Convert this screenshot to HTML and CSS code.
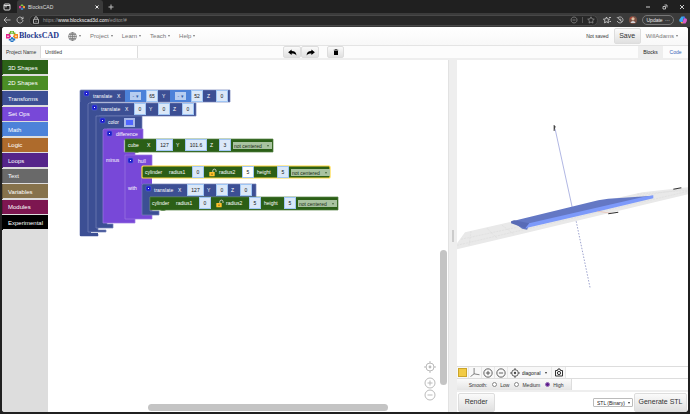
FILE: index.html
```html
<!DOCTYPE html>
<html lang="en">
<head>
<meta charset="utf-8">
<title>BlocksCAD</title>
<link rel="stylesheet" href="styles.css">
</head>
<body>
<svg class="defs" aria-hidden="true">
  <symbol id="logo" viewBox="0 0 12 12">
    <path fill="#70b52f" d="M4 1h4v1.6h1.4v2H7.5V3.8h-3v.8H2.8v-2H4z"/>
    <path fill="#e0268b" d="M0 4h4v1.5h1v1.6H4v1.4H0z"/>
    <path fill="#f28a1e" d="M8 4h4v4.5H8V7.1H7V5.5h1z"/>
    <path fill="#2374c4" d="M4.6 7.2h2.8v1.4h1.8v2H7.5V12h-3v-1.4H2.8V9h1.8z"/>
    <circle cx="2" cy="6.2" r=".8" fill="#fff"/><circle cx="10" cy="6.2" r=".8" fill="#fff"/><circle cx="6" cy="10" r=".8" fill="#fff"/><circle cx="6" cy="2.3" r=".7" fill="#fff"/>
  </symbol>
  <symbol id="lock" viewBox="0 0 8 8">
    <path d="M3.8 3.5V2.2a1.6 1.6 0 0 1 3.2 0v1.2" fill="none" stroke="#d8d8ce" stroke-width=".9"/>
    <rect x=".3" y="3.5" width="5.4" height="4.2" rx=".5" fill="#ffc12c"/><path d="M3 5v1.4" stroke="#5f4507" stroke-width=".9"/>
  </symbol>
  <symbol id="target" viewBox="0 0 12 12"><g fill="none" stroke="currentColor"><circle cx="6" cy="6" r="4"/><path d="M6 0v2.5M6 9.5V12M0 6h2.5M9.5 6H12"/></g><circle cx="6" cy="6" r="1.4" fill="currentColor"/></symbol>
  <symbol id="plus" viewBox="0 0 12 12"><g fill="none" stroke="currentColor"><circle cx="6" cy="6" r="5"/><path d="M3.5 6h5M6 3.5v5"/></g></symbol>
  <symbol id="minus" viewBox="0 0 12 12"><g fill="none" stroke="currentColor"><circle cx="6" cy="6" r="5"/><path d="M3.5 6h5"/></g></symbol>
  <symbol id="arrow" viewBox="0 0 10 8"><path d="M0 3.6 4 .5v1.8c3.5 0 5.3 1.5 5.5 5C8.200 5.500 6.700 5 4 5v1.800z"/></symbol>
</svg>

<div class="tabs">
  <svg class="ico" viewBox="0 0 10 10"><rect x="2" y="2" width="6" height="6" rx="1" fill="none" stroke="#ddd"/><path d="M2 3.500h6M4 3.500v2" stroke="#ddd"/></svg>
  <div class="tab"><svg class="fav"><use href="#logo"/></svg><span>BlocksCAD</span><button class="bare close" aria-label="Close tab"><svg class="tiny" viewBox="0 0 6 6"><path d="M1.500 1.500l3 3M4.500 1.500l-3 3" stroke="#eee"/></svg></button></div>
  <button class="bare" aria-label="New tab"><svg class="tiny" viewBox="0 0 6 6"><path d="M3 .5v5M.5 3h5" stroke="#bbb"/></svg></button>
  <div class="window">
    <button class="bare" aria-label="Minimize"><svg class="tiny" viewBox="0 0 6 6"><path d="M1 3h4" stroke="#ccc"/></svg></button>
    <button class="bare" aria-label="Restore"><svg class="tiny" viewBox="0 0 6 6"><path d="M1 2.500h2.500V5H1zM2.500 1H5v2.500" fill="none" stroke="#ddd" stroke-width=".8"/></svg></button>
    <button class="bare" aria-label="Close"><svg class="tiny" viewBox="0 0 6 6"><path d="M1 1l4 4M5 1L1 5" stroke="#ddd" stroke-width=".9"/></svg></button>
  </div>
</div>

<div class="address">
  <button class="bare" aria-label="Back"><svg class="nav" viewBox="0 0 8 8"><path d="M7.500 4H1M4 1 1 4l3 3" fill="none" stroke="#ccc" stroke-width=".8"/></svg></button>
  <button class="bare" aria-label="Reload"><svg class="nav" viewBox="0 0 8 8"><path d="M7 4a3 3 0 1 1-.9-2.100L7 3M7 .7V3H4.800" fill="none" stroke="#ccc" stroke-width=".8"/></svg></button>
  <div class="url">
    <svg class="nav" viewBox="0 0 8 8"><path d="M1.500 3.300h5v4h-5zM2.700 3.300V2a1.300 1.300 0 0 1 2.600 0v1.300M4 4.800v1" fill="none" stroke="#ccc" stroke-width=".8"/></svg>
    <span class="link">https://<b>www.blockscad3d.com</b>/editor/#</span>
    <svg class="nav" viewBox="0 0 8 8"><path d="M4 1a3 3 0 1 0 .1 0M2.500 4h3" fill="none" stroke="#888" stroke-width=".8"/></svg>
    <i class="rule"></i>
    <svg class="nav" viewBox="0 0 8 8"><path d="M4 .8l1 2.100 2.300.3-1.700 1.600.4 2.300-2-1.100-2 1.100.4-2.300L.7 3.200 3 2.900z" fill="none" stroke="#999" stroke-width=".7"/></svg>
  </div>
  <svg class="nav" viewBox="0 0 8 8"><path d="M3.500 1l.9 2 2.200.2L5 4.700l.5 2.100-2-1-2 1L2 4.700.4 3.200 2.600 3zM6 1.500h2M6.500 5.500H8" fill="none" stroke="#ddd" stroke-width=".8"/></svg>
  <svg class="nav" viewBox="0 0 8 8"><path d="M1.200 5A3 3 0 1 0 2 1.700M.8 1l5 5M4 2.500V4h1.500" fill="none" stroke="#ccc" stroke-width=".8"/></svg>
  <svg class="nav" viewBox="0 0 8 8"><circle cx="4" cy="4" r="4" fill="#7a5145"/><circle cx="4" cy="2.800" r="1.600" fill="#e2c1a5"/><path d="M1.500 7a2.600 2.600 0 0 1 5 0z" fill="#d6d6da"/><path d="M1 3l2-2" stroke="#c33b30"/></svg>
  <button class="update">Update <span>···</span></button>
  <svg class="nav" viewBox="0 0 8 8"><path d="M2.500.5h2.700L3.500 6H1.800C.3 6 0 4.800.4 3.500z" fill="#3aa9f2"/><path d="M4.500.5h1.200l1 2.500H5z" fill="#4d6af0"/><path d="M4.800 2.500h1.700c1.500 0 1.700 1.200 1.200 2.700L6.500 7.500H3.200z" fill="#d85bc8"/><path d="M1.500 6H4l-.7 1.500H2.500z" fill="#f4b64a"/></svg>
</div>

<div class="page">
  <header class="menu">
    <a class="brand" href="#"><svg class="logo"><use href="#logo"/></svg>BlocksCAD</a>
    <button class="bare item globe" aria-label="Language"><svg class="globe-ico" viewBox="0 0 8 8"><g fill="none" stroke="#777" stroke-width=".7"><circle cx="4" cy="4" r="3.500"/><ellipse cx="4" cy="4" rx="1.600" ry="3.500"/><path d="M.5 4h7M1 2.300h6M1 5.700h6M4 .5v7"/></g></svg><i class="caret"></i></button>
    <button class="bare item">Project<i class="caret"></i></button>
    <button class="bare item">Learn<i class="caret"></i></button>
    <button class="bare item">Teach<i class="caret"></i></button>
    <button class="bare item">Help<i class="caret"></i></button>
    <span class="state">Not saved</span>
    <button class="btn save">Save</button>
    <button class="bare item user">WillAdams<i class="caret"></i></button>
  </header>
  <div class="project">
    <label class="pname" for="pname">Project Name</label>
    <input class="ptext" id="pname" value="Untitled">
    <div class="tools">
      <button class="btn tool" aria-label="Undo"><svg class="arrow"><use href="#arrow"/></svg></button><button class="btn tool" aria-label="Redo"><svg class="arrow flip"><use href="#arrow"/></svg></button>
      <button class="btn tool trash" aria-label="Delete"><svg class="tiny" viewBox="0 0 6 6"><path d="M.8.800h1.400V.2h1.600v.6h1.400v.8H.8zM1 2h4v4H1z"/></svg></button>
    </div>
    <nav class="views"><a class="view on" href="#">Blocks</a><a class="view" href="#">Code</a></nav>
  </div>

  <main class="work">
    <nav class="toolbox">
      <button class="cat c1">3D Shapes</button><button class="cat c2">2D Shapes</button><button class="cat c3">Transforms</button><button class="cat c4">Set Ops</button><button class="cat c5">Math</button><button class="cat c6">Logic</button><button class="cat c7">Loops</button><button class="cat c8">Text</button><button class="cat c9">Variables</button><button class="cat c10">Modules</button><button class="cat c11">Experimental</button>
    </nav>

    <section class="canvas">
      <svg class="shapes" viewBox="0 0 300 180" aria-hidden="true">
        <g stroke-width=".7">
          <path fill="#3c4f94" stroke="#7382b8" d="M33 30h149v12H43l-2 2v130h9v2H33q-1 0-1-1V31q0-1 1-1z"/>
          <path fill="#3c4f94" d="M32 42h11v131h7v3H32z"/>
          <path fill="#3c4f94" stroke="#7382b8" d="M41 43h107v13H51l-1 2v112h8v2H40V44z"/>
          <path fill="#3c4f94" stroke="#7382b8" d="M48 56h46v13H59v95h6v4H48V57z"/>
          <path fill="#7848d8" stroke="#9b79e3" d="M56 69h39v11H76v12h11v66h0v5H55V70z"/>
          <path fill="#2b5f17" stroke="#548344" d="M77 79h148v13H91q-2 1-5 0H77z"/>
          <path fill="#7848d8" stroke="#9b79e3" d="M77 95h27v11H94v18h10v31h0v4H77z"/>
          <path fill="#7848d8" d="M94 118h10v6H94z"/>
          <path fill="#2b5f17" stroke="#ffd83c" stroke-width="1.200" d="M95 106h186q1 0 1 1v10q0 1-1 1H95q-1 0-1-1v-10z"/>
          <path fill="#3c4f94" stroke="#7382b8" d="M95 124h113v13H102v14h9v4H94v-30z"/>
          <path fill="#2b5f17" stroke="#548344" d="M102 137h188v13H118q-3 1-6 0h-10z"/>
        </g>
        <g fill="#1c1ccd" stroke="#5663d8" stroke-width=".6"><rect x="36" y="31" width="5" height="5" rx="1"/><rect x="44" y="45" width="5" height="5" rx="1"/><rect x="52" y="58" width="5" height="5" rx="1"/><rect x="59" y="71" width="5" height="5" rx="1"/><rect x="80" y="98" width="5" height="5" rx="1"/><rect x="98" y="126" width="5" height="5" rx="1"/></g>
        <path stroke="#fff" d="M38 33.500h1M46 47.500h1M54 60.500h1M61 73.500h1M82 100.500h1M100 128.500h1"/>
      </svg>

      <div class="row r1"><span class="name t">translate</span><span class="ax">X</span><span class="neg"><select class="op" aria-label="Sign of X"><option>- ▾</option></select><input class="n" aria-label="X" value="65"></span><span class="ax">Y</span><span class="neg"><select class="op" aria-label="Sign of Y"><option>- ▾</option></select><input class="n" aria-label="Y" value="52"></span><span class="ax">Z</span><input class="n" aria-label="Z" value="0"></div>
      <div class="row r2"><span class="name t">translate</span><span class="ax">X</span><input class="n" aria-label="X" value="0"><span class="ax">Y</span><input class="n" aria-label="Y" value="0"><span class="ax">Z</span><input class="n" aria-label="Z" value="0"></div>
      <div class="row r3"><span class="name">color</span><button class="swatch" aria-label="Color"></button></div>
      <div class="row r4">difference</div>
      <div class="row r5"><span class="name cube">cube</span><span class="ax">X</span><input class="n w3" aria-label="X" value="127"><span class="ax">Y</span><input class="n w4" aria-label="Y" value="101.6"><span class="ax">Z</span><input class="n" aria-label="Z" value="3"><span class="pick"><select aria-label="Centering"><option>not centered</option></select></span></div>
      <div class="row r6">minus</div>
      <div class="row r7">hull</div>
      <div class="row r8"><span class="name cyl">cylinder</span><span class="rad">radius1</span><input class="n" aria-label="radius1" value="0"><svg class="lock"><use href="#lock"/></svg><span class="rad">radius2</span><input class="n edit" aria-label="radius2" value="5"><span class="hgt">height</span><input class="n" aria-label="height" value="5"><span class="pick"><select aria-label="Centering"><option>not centered</option></select></span></div>
      <div class="row r9">with</div>
      <div class="row r10"><span class="name t">translate</span><span class="ax">X</span><input class="n w3" aria-label="X" value="127"><span class="ax">Y</span><input class="n" aria-label="Y" value="0"><span class="ax">Z</span><input class="n" aria-label="Z" value="0"></div>
      <div class="row r11"><span class="name cyl">cylinder</span><span class="rad">radius1</span><input class="n" aria-label="radius1" value="0"><svg class="lock"><use href="#lock"/></svg><span class="rad">radius2</span><input class="n" aria-label="radius2" value="5"><span class="hgt">height</span><input class="n" aria-label="height" value="5"><span class="pick"><select aria-label="Centering"><option>not centered</option></select></span></div>

      <div class="zooms"><button class="bare" aria-label="Center"><svg class="z"><use href="#target"/></svg></button><button class="bare" aria-label="Zoom in"><svg class="z"><use href="#plus"/></svg></button><button class="bare" aria-label="Zoom out"><svg class="z"><use href="#minus"/></svg></button></div>
      <i class="bar vbar"></i><i class="bar hbar"></i>
    </section>

    <div class="gutter"><i></i></div>

    <section class="viewer">
      <svg class="scene" viewBox="0 0 231 306" preserveAspectRatio="xMinYMin slice" role="img" aria-label="3D view">
        <path fill="#e9e9e9" d="M0 183 8 172 185 132l46-5v7L0 189z"/>
        <g stroke="#d9d9d9" stroke-width=".5" fill="none"><path d="M4 179 60 167M0 185l231-54M14 171l-2 14M30 168l10 10M45 165l12 9M180 134l51-4M170 138l55-9" stroke-dasharray="2 1"/></g>
        <path d="M98 69 115 147" stroke="#a8afe0" stroke-width=".9"/>
        <path d="M119 161l14 67" stroke="#9299c8" stroke-width=".9" stroke-dasharray="1.500 1.500"/>
        <path d="M97 65v6M98 66l-1 4" stroke="#444" stroke-width="1"/>
        <path fill="#6478c4" d="M55 161 141 140l10-1.500 45-3-46 12-78 17-2 5-5-1z"/>
        <path fill="#7d9afa" d="M72 163 187 136.500l9-1.500v3L150 149 68 168z"/>
        <path fill="#586bb6" d="M54 161l3-1 15 3-4 5-14-5z"/>
        <path d="M140 151l14 2" stroke="#e9b5a5" stroke-width=".6"/><path d="M151 153.500l10-1.500M216 129l8-1.500" stroke="#333" stroke-width="1"/>
      </svg>
      <div class="camera">
        <button class="bare cell" aria-label="Background color"><i class="yellow"></i></button>
        <button class="bare cell" aria-label="Axes"><svg class="ax-ico" viewBox="0 0 10 10"><path d="M4 0v6.500L0 9.500M4 6.500l6 1" fill="none" stroke="#555" stroke-width=".8"/></svg></button>
        <button class="bare cell" aria-label="Zoom in"><svg class="v"><use href="#plus"/></svg></button>
        <button class="bare cell" aria-label="Zoom out"><svg class="v"><use href="#minus"/></svg></button>
        <span class="cell angle"><svg class="v"><use href="#target"/></svg><span class="drop"><select class="diag" aria-label="View angle"><option>diagonal</option></select></span></span>
        <button class="bare cell" aria-label="Screenshot"><svg class="cam" viewBox="0 0 9 9"><path d="M1 2.500h2L3.500 1h2L6 2.500h2V8H1z" fill="none" stroke="#333"/><circle cx="4.500" cy="5" r="1.600" fill="none" stroke="#333"/></svg></button>
      </div>
      <div class="smooth"><div class="opts"><span>Smooth:</span><label><input type="radio" name="s">Low</label><label><input type="radio" name="s">Medium</label><label><input type="radio" name="s" checked>High</label></div></div>
      <div class="output"><button class="btn big">Render</button><span class="drop format"><select aria-label="File format"><option>STL (Binary)</option></select></span><button class="btn big gen">Generate STL</button></div>
    </section>
  </main>
</div>
</body>
</html>
```
FILE: styles.css
```css
* { box-sizing: border-box; }
html, body { height: 100%; }
body {
  margin: 0;
  display: flex;
  flex-direction: column;
  padding: 0 2px 2px;
  background: #202020;
  font: 5px/8px "Liberation Sans", Arial, sans-serif;
  color: #333;
  overflow: hidden;
}
button, input, select { font: inherit; color: inherit; margin: 0; padding: 0; border: 0; border-radius: 0; }
select { appearance: none; background: none; display: block; }
a { text-decoration: none; color: inherit; }
svg { display: block; flex: none; }
.defs { position: absolute; width: 0; height: 0; }
.bare { background: none; display: flex; align-items: center; }
.tiny { width: 6px; height: 6px; }
.nav { width: 8px; height: 8px; }

.tabs { display: flex; align-items: center; height: 13px; gap: 5px; color: #ddd; flex: none; }
.ico { width: 10px; height: 10px; margin-top: 1px; }
.tab { display: flex; align-items: center; align-self: stretch; gap: 3px; width: 86px; padding: 0 3px 0 2px; background: #3b3b3b; border-radius: 3px 3px 0 0; }
.fav { width: 6px; height: 6px; }
.close { margin-left: auto; }
.window { display: flex; gap: 11px; margin-left: auto; padding-right: 3px; }

.address { display: flex; align-items: center; gap: 5px; height: 14px; padding: 0 3px; margin: 0 -2px; background: #3b3b3b; flex: none; }
.url { display: flex; align-items: center; gap: 3px; flex: 1; height: 11px; padding: 0 2px; background: #282828; border: 1px solid #484848; border-radius: 6px; color: #999; }
.url b { color: #f2f2f2; font-weight: 400; }
.link { flex: 1; }
.rule { width: 1px; height: 6px; background: #555; margin: 0 1px; }
.update { height: 10px; padding: 0 3px; border: 1px solid #777; border-radius: 5px; background: none; color: #eee; line-height: 7px; }
.update span { padding-left: 1px; }

.page { display: flex; flex-direction: column; flex: 1; min-height: 0; background: #fff; border-radius: 3px; overflow: hidden; }
.menu { display: flex; align-items: center; height: 18px; flex: none; padding-left: 4px; background: linear-gradient(#fff, #f8f8f8); color: #777; font-size: 6px; }
.brand { display: flex; align-items: center; gap: 1px; color: #23378b; font: bold 8px/12px "Liberation Serif", serif; }
.logo { width: 12px; height: 12px; }
.item { gap: 2px; margin-right: 9px; }
.globe { margin-left: 9px; }
.globe-ico { width: 9px; height: 9px; }
.caret { border: 1px solid transparent; border-top: 2px solid #777; border-bottom: 0; }
.state { margin-left: auto; margin-right: 5px; color: #333; font-size: 5px; }
.btn { background: linear-gradient(#fafafa, #e0e0e0); border: 1px solid #ddd; border-radius: 2px; color: #333; display: flex; align-items: center; justify-content: center; }
.save { width: 27px; height: 16px; font-size: 7px; margin-right: 5px; }
.user { margin-right: 10px; }

.project { display: flex; align-items: stretch; flex: none; height: 15px; background: #fcfcfc; border-top: 1px solid #e4e4e4; border-bottom: 2px solid #eee; }
.pname { width: 39px; background: #eee; line-height: 12px; padding-left: 4px; white-space: nowrap; border-right: 1px solid #ddd; }
.ptext { width: 97px; padding-left: 4px; background: #fff; border-right: 1px solid #ddd; }
.tools { display: flex; flex: 1; justify-content: center; padding: 0 170px 0 21px; }
.tool { width: 18px; }
.trash { margin-left: 8px; width: 17px; }
.arrow { width: 9px; height: 7px; }
.flip { transform: scaleX(-1); }
.views { display: flex; }
.view { width: 25px; text-align: center; line-height: 12px; color: #3a67b8; }
.on { background: #eee; color: #222; }

.work { display: flex; flex: 1; min-height: 0; }
.toolbox { width: 46px; background: #ddd; display: flex; flex-direction: column; gap: 1px; }
.cat { height: 15px; flex: none; padding-left: 5px; text-align: left; color: #fff; font-size: 6px; box-shadow: inset 0 -1px #ddd; border-left: 1px solid #0003; }
.cat:nth-child(even) { height: 14px; box-shadow: none; }
.c1 { background: #2c6218; } .c2 { background: #4b8d25; } .c3 { background: #3c4f94; } .c4 { background: #7848d8; }
.c5 { background: #4c82d9; } .c6 { background: #ae6b2c; } .c7 { background: #55258a; } .c8 { background: #696969; }
.c9 { background: #86724b; } .c10 { background: #7d1650; } .c11 { background: #000; }

.canvas { position: relative; flex: 399; min-width: 0; background: #fff; overflow: hidden; }
.shapes { position: absolute; left: 0; top: 0; width: 300px; height: 180px; }
.row { position: absolute; display: flex; align-items: center; height: 12px; color: #fff; white-space: nowrap; }
.r1 { left: 45px; top: 30px; } .r2 { left: 53px; top: 43px; } .r3 { left: 60px; top: 56px; gap: 5px; } .r4 { left: 68px; top: 68px; }
.r5 { left: 80px; top: 79px; } .r6 { left: 58px; top: 94px; } .r7 { left: 90px; top: 95px; } .r8 { left: 97px; top: 106px; }
.r9 { left: 80px; top: 122px; } .r10 { left: 106px; top: 124px; } .r11 { left: 104px; top: 137px; }
.t { width: 24px; } .cube { width: 19px; } .cyl { width: 24px; } .rad { width: 18px; } .hgt { width: 15px; }
.ax { width: 4px; }
.n { width: 10px; height: 10px; margin: 0 4px 0 6px; background: #dbe8f8; color: #111; text-align: center; box-shadow: 0 0 0 1px #9fc6f5, -3px 0 0 -2px #9fc6f5; }
.w3 { width: 15px; } .w4 { width: 20px; }
.edit { background: #fff; }
.neg { display: flex; align-items: center; height: 12px; margin: 0 4px; padding-left: 5px; background: #4c82d9; }
.neg .n { margin: 0 1px 0 6px; }
.op { width: 11px; height: 8px; background: #b6cdf0; color: #2f5ca8; text-align: center; }
.swatch { width: 11px; height: 9px; background: #5065ff; border: 2px solid #a7b7e8; }
.lock { width: 8px; height: 9px; margin: 0 2px; }
.pick { position: relative; width: 39px; background: #a9c3a0; color: #1b2c14; margin-left: -1px; }
.pick select { width: 100%; height: 7px; padding-left: 1px; }
.pick::after, .drop::after { content: ""; position: absolute; right: 3px; top: 3px; border: 1px solid transparent; border-top: 2px solid #333; border-bottom: 0; }
.pick::after { border-top-color: #47683b; }

.zooms { position: absolute; right: 12px; bottom: 11px; display: flex; flex-direction: column; color: #bbb; }
.z { width: 12px; height: 12px; }
.zooms .bare:first-child { margin-bottom: 4px; }
.bar { position: absolute; background: #c4c4c4; border-radius: 4px; }
.vbar { right: 1px; top: 54%; bottom: 27px; width: 7px; }
.hbar { left: 25%; width: 60%; bottom: 1px; height: 7px; }
.gutter { width: 9px; background: #eee; display: flex; align-items: center; justify-content: center; border-left: 1px solid #e2e2e2; }
.gutter i { width: 2px; height: 12px; background: #ccc; }

.viewer { flex: 231; min-width: 0; display: flex; flex-direction: column; }
.scene { flex: 1; min-height: 0; width: 100%; }
.camera { display: flex; height: 13px; flex: none; border-top: 1px solid #ddd; border-bottom: 1px solid #ddd; }
.cell { height: 11px; padding: 0 1px; border-right: 1px solid #e8e8e8; background: #f8f8f8; color: #444; }
.yellow { width: 9px; height: 9px; background: #f2cb45; border: 1px solid #cba52b; }
.ax-ico { width: 10px; height: 9px; }
.v { width: 10px; height: 10px; }
.angle { display: flex; align-items: center; gap: 2px; padding-left: 2px; }
.drop { position: relative; color: #222; }
.diag { width: 28px; }
.cam { width: 10px; height: 9px; margin-left: 1px; }
.smooth { display: flex; height: 13px; flex: none; border-bottom: 2px solid #eee; }
.opts { display: flex; align-items: center; gap: 5px; width: 50%; padding-left: 12px; background: linear-gradient(#fafafa, #e5e5e5); border-right: 1px solid #ddd; }
.opts label { display: flex; align-items: center; gap: 3px; }
.opts input { appearance: none; width: 5px; height: 5px; border: 1px solid #888; border-radius: 50%; background: #fff; }
.opts input:checked { background: #5b1a8b; border-color: #9a72b8; }
.output { display: flex; align-items: center; height: 20px; flex: none; padding: 0 1px; }
.big { width: 37px; height: 19px; font-size: 7px; }
.gen { width: 53px; }
.format { width: 40px; margin: 0 1px 0 auto; border: 1px solid #bbb; border-radius: 1px; background: #fff; }
.format::after { right: 2px; }
.format select { width: 100%; height: 7px; padding-left: 3px; }
```
